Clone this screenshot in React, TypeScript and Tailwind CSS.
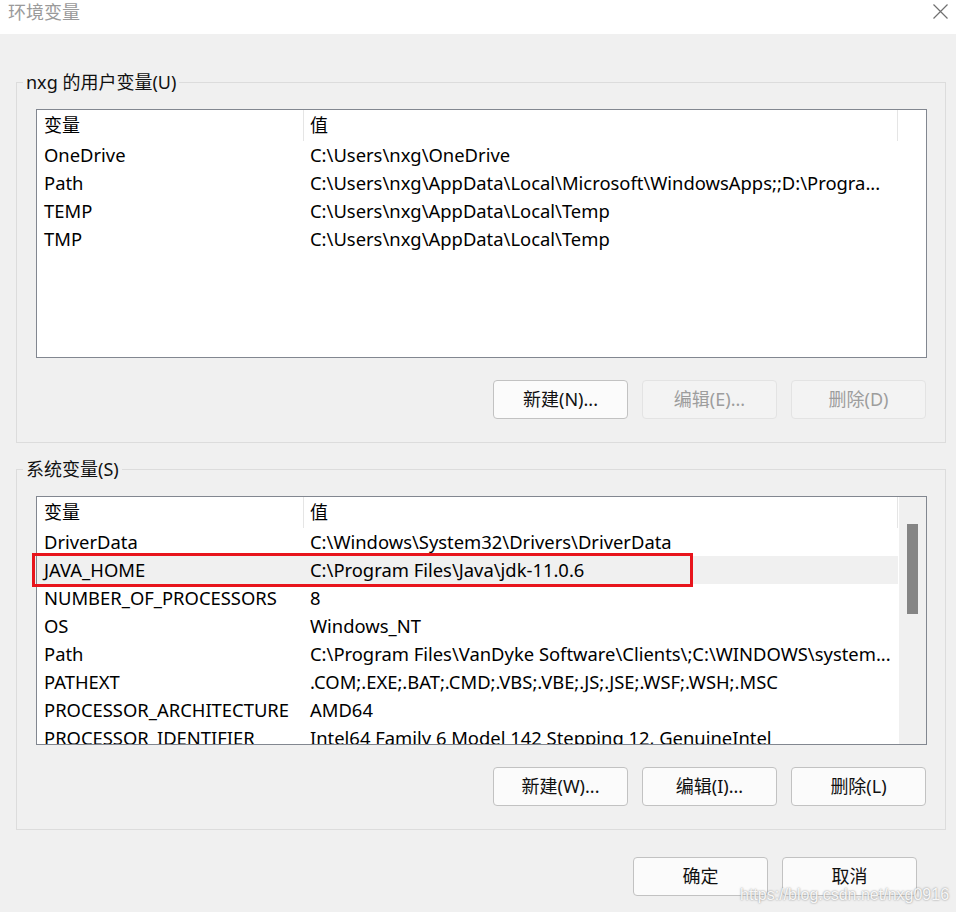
import React from "react";

type Row = { name: string; value: string; selected?: boolean };

const userRows: Row[] = [
  { name: "OneDrive", value: "C:\\Users\\nxg\\OneDrive" },
  { name: "Path", value: "C:\\Users\\nxg\\AppData\\Local\\Microsoft\\WindowsApps;;D:\\Progra..." },
  { name: "TEMP", value: "C:\\Users\\nxg\\AppData\\Local\\Temp" },
  { name: "TMP", value: "C:\\Users\\nxg\\AppData\\Local\\Temp" },
];

const sysRows: Row[] = [
  { name: "DriverData", value: "C:\\Windows\\System32\\Drivers\\DriverData" },
  { name: "JAVA_HOME", value: "C:\\Program Files\\Java\\jdk-11.0.6", selected: true },
  { name: "NUMBER_OF_PROCESSORS", value: "8" },
  { name: "OS", value: "Windows_NT" },
  { name: "Path", value: "C:\\Program Files\\VanDyke Software\\Clients\\;C:\\WINDOWS\\system..." },
  { name: "PATHEXT", value: ".COM;.EXE;.BAT;.CMD;.VBS;.VBE;.JS;.JSE;.WSF;.WSH;.MSC" },
  { name: "PROCESSOR_ARCHITECTURE", value: "AMD64" },
  { name: "PROCESSOR_IDENTIFIER", value: "Intel64 Family 6 Model 142 Stepping 12, GenuineIntel" },
];

function Btn({ label, disabled }: { label: string; disabled?: boolean }) {
  return (
    <div
      className={
        disabled
          ? "w-[135px] h-[39px] flex items-center justify-center rounded-[4px] border border-[#e3e3e3] bg-[#f3f3f3] text-[#9d9d9d] text-[18px]"
          : "w-[135px] h-[39px] flex items-center justify-center rounded-[4px] border border-[#c2c2c2] bg-[#fbfbfb] text-[#111111] text-[18px]"
      }
    >
      {label}
    </div>
  );
}

function ListView({ rows, scroll }: { rows: Row[]; scroll?: boolean }) {
  return (
    <div className="relative w-[891px] h-[249px] border border-[#828790] bg-white overflow-hidden flex">
      <div className="flex-1 flex flex-col min-w-0">
        <div className="h-[31px] flex shrink-0 text-[18px] text-black">
          <div className="w-[267px] pl-[7px] flex items-center border-r border-[#e5e5e5]">变量</div>
          <div className="w-[594px] pl-[6px] flex items-center border-r border-[#e5e5e5]">值</div>
        </div>
        {rows.map((r) => (
          <div
            key={r.name}
            className={
              r.selected
                ? "h-[28px] flex shrink-0 items-center text-[18.4px] text-black bg-[#f0f0f0] w-[861px]"
                : "h-[28px] flex shrink-0 items-center text-[18.4px] text-black w-[861px]"
            }
          >
            <div className="w-[267px] pl-[7px] whitespace-nowrap overflow-hidden">{r.name}</div>
            <div className="flex-1 pl-[6px] whitespace-nowrap overflow-hidden">{r.value}</div>
          </div>
        ))}
      </div>
      {scroll && (
        <div className="w-[27px] shrink-0 bg-[#f0f0f0] flex justify-center pt-[27px]">
          <div className="w-[11px] h-[90px] bg-[#858585]" />
        </div>
      )}
    </div>
  );
}

function Group({
  label,
  rows,
  scroll,
  buttons,
}: {
  label: string;
  rows: Row[];
  scroll?: boolean;
  buttons: { label: string; disabled?: boolean }[];
}) {
  return (
    <div className="relative mx-[16px] w-[930px] h-[361px] border border-[#dcdcdc] pt-[26px] pl-[19px]">
      <span className="absolute left-[6px] top-[-13px] px-[3px] bg-[#f0f0f0] text-[18px] leading-[24px] text-[#111111]">
        {label}
      </span>
      <ListView rows={rows} scroll={scroll} />
      <div className="flex justify-end gap-[14px] w-[890px] mt-[22px]">
        {buttons.map((b) => (
          <Btn key={b.label} label={b.label} disabled={b.disabled} />
        ))}
      </div>
    </div>
  );
}

export default function App() {
  return (
    <div
      className="relative w-[956px] h-[912px] bg-[#f0f0f0] overflow-hidden"
      style={{ fontFamily: '"Segoe UI", "Noto Sans", "Noto Sans CJK SC", sans-serif' }}
    >
      <div className="h-[34px] bg-white flex items-start justify-between pl-[8px] pr-[8px]">
        <span className="text-[18px] text-[#9a9a9a] leading-[24px] mt-[0px]">环境变量</span>
        <svg width="15" height="15" viewBox="0 0 15 15" className="mt-[4px]">
          <path d="M0.5 0.5 L14.5 14.5 M14.5 0.5 L0.5 14.5" stroke="#707070" strokeWidth="1.2" fill="none" />
        </svg>
      </div>

      <div className="pt-[48px]">
        <Group
          label="nxg 的用户变量(U)"
          rows={userRows}
          buttons={[{ label: "新建(N)..." }, { label: "编辑(E)...", disabled: true }, { label: "删除(D)", disabled: true }]}
        />
      </div>
      <div className="pt-[26px]">
        <Group
          label="系统变量(S)"
          rows={sysRows}
          scroll
          buttons={[{ label: "新建(W)..." }, { label: "编辑(I)..." }, { label: "删除(L)" }]}
        />
      </div>

      <div className="flex justify-end gap-[14px] pr-[39px] mt-[27px]">
        <Btn label="确定" />
        <Btn label="取消" />
      </div>

      <div className="absolute left-[32px] top-[553px] w-[661px] h-[34px] border-[3px] border-[#e8141c] pointer-events-none" />

      <div
        className="absolute left-[740px] top-[883px] text-[16px] text-white/90 [text-shadow:0_0_2px_#7a7a7a]"
        style={{ fontFamily: '"Liberation Sans", Arial, sans-serif' }}
      >
        https://blog.csdn.net/nxg0916
      </div>
    </div>
  );
}
